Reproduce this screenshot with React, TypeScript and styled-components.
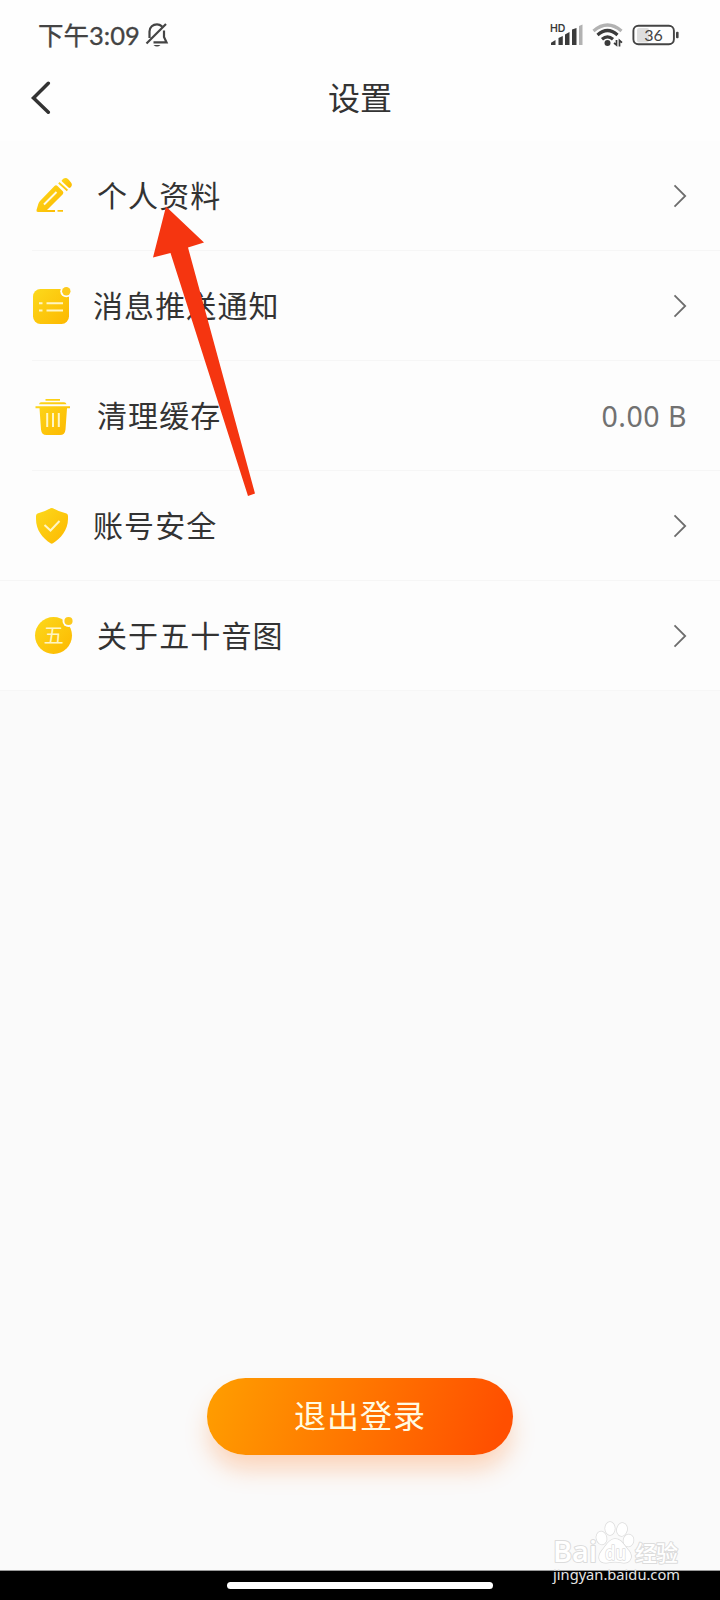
import React from "react";
import styled, { createGlobalStyle } from "styled-components";

const GlobalStyle = createGlobalStyle`
  * { box-sizing: border-box; }
  body { margin: 0; background: #fafafa; }
`;

const Screen = styled.div`
  position: relative;
  display: flex;
  flex-direction: column;
  width: 720px;
  height: 1600px;
  overflow: hidden;
  background: #fafafa;
  color: #333;
  font-family: "Noto Sans CJK SC", "Noto Sans", sans-serif;
`;

const StatusBar = styled.header`
  display: flex;
  justify-content: space-between;
  align-items: center;
  height: 70px;
  padding: 0 41px 0 38px;
  background: #fefefe;
`;

const Clock = styled.div`
  display: flex;
  align-items: center;
  height: 70px;
  line-height: 68px;
  color: #444;
`;

const ClockTime = styled.span`
  margin-right: 5px;
  font-family: Lato, "Noto Sans CJK SC", sans-serif;
  font-size: 25.5px;
  -webkit-text-stroke: 0.3px #444;
`;

const StatusIcons = styled.div`
  display: flex;
  align-items: center;
  gap: 8px;
`;

const TitleBar = styled.div`
  display: grid;
  grid-template-columns: 100px 1fr 100px;
  align-items: center;
  height: 71px;
  padding-bottom: 16px;
  background: #fefefe;
`;

const BackButton = styled.button`
  display: flex;
  padding: 0 0 0 30px;
  border: 0;
  background: none;
`;

const Title = styled.h1`
  margin: 0;
  padding-bottom: 4px;
  text-align: center;
  font-size: 32px;
  line-height: 46px;
  font-weight: 400;
`;

const List = styled.main`
  background: #fdfdfd;
`;

const Row = styled.div<{ $inset: number }>`
  display: flex;
  align-items: center;
  height: 110px;
  padding: 0 33px 0 32px;
  background: linear-gradient(#f6f6f6, #f6f6f6) ${(p) => p.$inset}px 100% / 100% 1.5px no-repeat;
`;

const RowIcon = styled.svg`
  width: 42px;
  height: 42px;
  flex: none;
`;

const Label = styled.span<{ $gap: number }>`
  flex: 1;
  margin-left: ${(p) => p.$gap}px;
  padding-bottom: 4px;
  font-size: 30px;
  line-height: 44px;
  letter-spacing: 1.1px;
`;

const Value = styled.span`
  font-family: "Noto Sans", sans-serif;
  font-size: 28.5px;
  line-height: 44px;
  letter-spacing: 0.5px;
  color: #717171;
`;

const Footer = styled.footer`
  display: flex;
  flex: 1;
  flex-direction: column;
  align-items: center;
  justify-content: flex-end;
  padding-bottom: 115px;
`;

const LogoutButton = styled.button`
  width: 306px;
  height: 77px;
  padding: 0 0 5px;
  border: 0;
  border-radius: 39px;
  background: linear-gradient(108deg, #ff9c00 3%, #ff7900 45%, #ff4f00 94%);
  box-shadow: 0 16px 24px -2px rgba(255, 130, 50, 0.32);
  color: #fffbe2;
  font-family: "Noto Sans CJK SC", sans-serif;
  font-size: 32px;
  line-height: 48px;
  letter-spacing: 1px;
`;

const NavBar = styled.div`
  display: flex;
  justify-content: center;
  height: 30px;
  padding-top: 11px;
  border-top: 1px solid #999;
  background: #000;
`;

const HomeIndicator = styled.div`
  width: 266px;
  height: 7px;
  border-radius: 4px;
  background: #fff;
`;

const Pointer = styled.svg`
  position: absolute;
  left: 150px;
  top: 205px;
`;

const Watermark = styled.svg`
  position: absolute;
  left: 545px;
  top: 1515px;
`;

const BellOff = () => (
  <svg width="24" height="26" viewBox="0 0 24 26" fill="none" stroke="#444" strokeWidth="2.2">
    <path d="M4.500 16V9.500C4.500 5 8 2.300 12 2.300C14 2.300 15.500 3 17 4.300M19 8.500V15L21.500 20.300H8.500M1.500 21.500L21 2" />
    <path d="M8.500 23H15.500Q12 26.200 8.500 23Z" fill="#444" stroke="none" />
  </svg>
);

const Signal = () => (
  <svg width="34" height="26" viewBox="0 0 34 26" fill="#3b3b3b">
    <text x="0" y="10" fontFamily="Inter, sans-serif" fontWeight="600" fontSize="10.500">HD</text>
    <path d="M1 23V20.800L5.500 18V23ZM8.500 23V16L12.800 14V23ZM15 23V12.500L19.500 10V23ZM22 23V7.500L26.500 6V23Z" />
    <path d="M29 23V4L32.500 2.500V23Z" fill="#b2b2b2" />
  </svg>
);

const Wifi = () => (
  <svg width="32" height="26" viewBox="0 0 32 26" fill="none" stroke="#3b3b3b" strokeWidth="3.2">
    <path d="M1.500 9Q15.500 -3 29.500 9" stroke="#b2b2b2" />
    <path d="M5.500 13Q15.500 4 25.500 13M10 17.300Q15.500 12.500 21 17.300" />
    <circle cx="15.500" cy="21" r="3" fill="#3b3b3b" stroke="none" />
    <path d="M24.500 18V23L22 21M27.500 24.500V18.500L30 20.700" strokeWidth="1.700" />
  </svg>
);

const Battery = () => (
  <svg width="47" height="26" viewBox="0 0 47 26">
    <rect x="5" y="6" width="12" height="14.500" rx="2" fill="#dedede" />
    <rect x="1.400" y="3.700" width="40.500" height="18.500" rx="5" fill="none" stroke="#444" strokeWidth="1.900" />
    <rect x="44" y="9.700" width="2.600" height="6.500" rx="1" fill="#444" />
    <text x="21.500" y="19" textAnchor="middle" fill="#444" fontFamily="Lato, sans-serif" fontSize="16">36</text>
  </svg>
);

const Chevron = () => (
  <svg width="15" height="26" viewBox="0 0 15 26" fill="none" stroke="#6d6d6d" strokeWidth="1.800">
    <path d="M2.500 2.300L13.200 13L2.500 23.700" />
  </svg>
);

const GoldGradient = ({ id }: { id: string }) => (
  <defs>
    <linearGradient id={id} x1="0" y1="0" x2="1" y2="1">
      <stop offset="0" stopColor="#fcd91c" />
      <stop offset="1" stopColor="#fdb800" />
    </linearGradient>
  </defs>
);

const EditIcon = () => (
  <RowIcon viewBox="0 0 42 42">
    <GoldGradient id="edit" />
    <g fill="url(#edit)">
      <path d="M22.500 11Q24 9.700 25.500 11L30.800 16.300Q32 17.800 30.800 19.300L15 35H23V37H6Q4 37 4.500 35L6.300 29Q6.700 27.400 8 26Z" />
      <path d="M30 5Q33 1.500 36.500 4.500L39 7.500Q41 10 38.500 12.500Q37.500 13.300 36.500 12.500L30 6.500Q29.200 5.800 30 5Z" />
      <path d="M27.500 7L36 14.800L34.800 16.200L26.200 8.400ZM25.500 35H31V36.800H25.500Z" />
    </g>
    <path d="M12 29.500L24.500 17" stroke="#fffbe6" strokeWidth="2" />
  </RowIcon>
);

const MessageIcon = () => (
  <RowIcon viewBox="0 0 42 42">
    <GoldGradient id="message" />
    <rect x="1" y="4" width="36" height="35" rx="7.500" fill="url(#message)" />
    <circle cx="34.300" cy="6.200" r="6" fill="#fdfdfd" />
    <circle cx="34.300" cy="6.200" r="4.200" fill="#fdca1c" />
    <path d="M7 18.200H10.500M14.500 18.200H31M7 25.500H10.500M14.500 25.500H31" stroke="#fff6c4" strokeWidth="2" />
  </RowIcon>
);

const TrashIcon = () => (
  <RowIcon viewBox="0 0 42 42">
    <GoldGradient id="trash" />
    <path d="M13.500 4H28V5.700H13.500ZM7 9.300Q7.500 7.300 9 7.300H32Q34 7.300 34.500 9.300ZM3.500 11.300H38V13.200H35L33.500 34.500Q33 40 28 40H14.500Q9.500 40 9 34.500L7.500 13.200H3.500Z" fill="url(#trash)" />
    <path d="M15.200 18V32M21 18V32M26.800 18V32" stroke="#fff6c4" strokeWidth="2" />
  </RowIcon>
);

const ShieldIcon = () => (
  <RowIcon viewBox="0 0 42 42">
    <GoldGradient id="shield" />
    <path d="M18.500 3.200Q19.700 2.600 21 3.200Q27.500 7 34.500 8.500Q36 9 36 11V14C36 25 28.500 33.500 21 38.300Q19.700 39 18.500 38.300C10.500 33 4 25 4 14V11Q4 9 5.500 8.500Q12 7 18.500 3.200Z" fill="url(#shield)" />
    <path d="M12.500 20L18.500 25.500L27.500 16" fill="none" stroke="#fff6c4" strokeWidth="2" />
  </RowIcon>
);

const AboutIcon = () => (
  <RowIcon viewBox="0 0 42 42">
    <GoldGradient id="about" />
    <circle cx="21.500" cy="20.500" r="18.500" fill="url(#about)" />
    <circle cx="36.500" cy="6" r="6" fill="#fdfdfd" />
    <circle cx="36.500" cy="6" r="4.100" fill="#fdca1c" />
    <text x="21.700" y="27.700" textAnchor="middle" fill="#fff6c4" fontFamily="Noto Sans CJK SC, sans-serif" fontSize="20">五</text>
  </RowIcon>
);

const items = [
  { label: "个人资料", icon: <EditIcon />, gap: 23, inset: 32 },
  { label: "消息推送通知", icon: <MessageIcon />, gap: 19, inset: 32 },
  { label: "清理缓存", icon: <TrashIcon />, gap: 23, inset: 32, value: "0.00 B" },
  { label: "账号安全", icon: <ShieldIcon />, gap: 19, inset: 0 },
  { label: "关于五十音图", icon: <AboutIcon />, gap: 23, inset: 0 },
];

export default function App() {
  return (
    <Screen>
      <GlobalStyle />
      <StatusBar>
        <Clock>
          <ClockTime>下午3:09</ClockTime>
          <BellOff />
        </Clock>
        <StatusIcons>
          <Signal />
          <Wifi />
          <Battery />
        </StatusIcons>
      </StatusBar>
      <TitleBar>
        <BackButton aria-label="返回">
          <svg width="22" height="34" viewBox="0 0 22 34" fill="none" stroke="#333" strokeWidth="3.500" strokeLinecap="round">
            <path d="M18.300 2.300L3.500 17L18.300 31.200" />
          </svg>
        </BackButton>
        <Title>设置</Title>
      </TitleBar>
      <List>
        {items.map((item) => (
          <Row key={item.label} $inset={item.inset}>
            {item.icon}
            <Label $gap={item.gap}>{item.label}</Label>
            {item.value ? <Value>{item.value}</Value> : <Chevron />}
          </Row>
        ))}
      </List>
      <Footer>
        <LogoutButton>退出登录</LogoutButton>
      </Footer>
      <NavBar>
        <HomeIndicator />
      </NavBar>
      <Pointer width="110" height="295" viewBox="0 0 110 295">
        <path d="M16 1.500L54 37.500L38 42.500L105 288.500L98 291L20.500 48L3 52.500Z" fill="#f53510" />
      </Pointer>
      <Watermark width="150" height="75" viewBox="0 0 150 75">
        <g fill="#fff" stroke="#dcdcdc" strokeWidth="2" paintOrder="stroke" strokeLinejoin="round">
          <text x="8" y="47" fontFamily="Open Sans, sans-serif" fontWeight="600" fontSize="28" textLength="44" lengthAdjust="spacingAndGlyphs">Bai</text>
          <g strokeWidth="1.500">
            <ellipse cx="56.500" cy="23" rx="5" ry="6.500" transform="rotate(-12 56.500 23)" />
            <ellipse cx="65" cy="13.500" rx="4.800" ry="6.500" />
            <ellipse cx="77" cy="14.500" rx="5" ry="6.500" transform="rotate(12 77 14.500)" />
            <ellipse cx="83.500" cy="25.500" rx="5" ry="6" transform="rotate(12 83.500 25.500)" />
            <path d="M70 24C77 24 79 31 84 36C89 43 84 49 77 47.500Q70 46 63 47.500C55 49 51 43 57 35.500C61 31 64 24 70 24Z" />
          </g>
          <text x="60" y="44.500" fontFamily="Open Sans, sans-serif" fontWeight="600" fontSize="19" textLength="21" lengthAdjust="spacingAndGlyphs" strokeWidth="1.500">du</text>
          <text x="90" y="45.500" fontFamily="Noto Sans CJK SC, sans-serif" fontWeight="500" fontSize="22" textLength="43">经验</text>
        </g>
        <text x="8" y="64.500" fill="#e5e5e5" fontFamily="Noto Sans, sans-serif" fontSize="14" textLength="127" lengthAdjust="spacingAndGlyphs">jingyan.baidu.com</text>
      </Watermark>
    </Screen>
  );
}
